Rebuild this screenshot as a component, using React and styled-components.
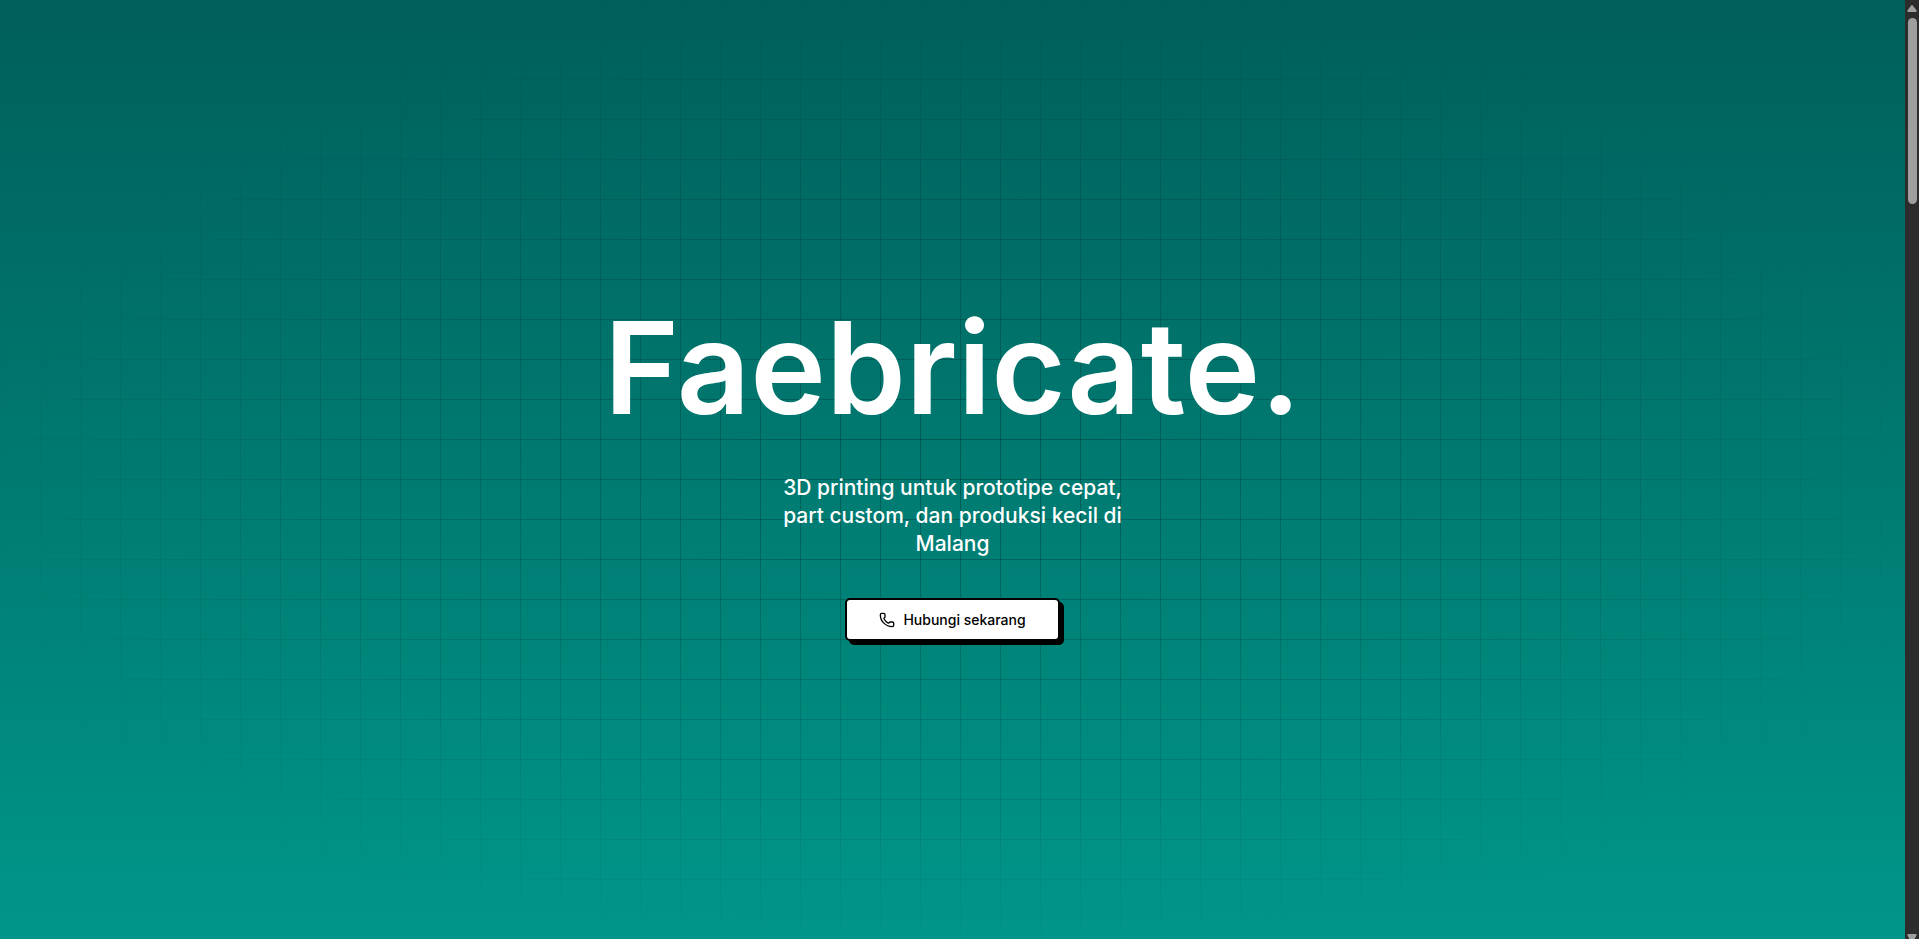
import React from "react";
import styled, { createGlobalStyle } from "styled-components";
import { Phone } from "lucide-react";

const GlobalStyle = createGlobalStyle`
  *, *::before, *::after { box-sizing: border-box; }
  body { margin: 0; background: #009689; }
`;

const Page = styled.div`
  display: flex;
  height: 100vh;
  overflow: hidden;
  font-family: "Inter", "Liberation Sans", sans-serif;
`;

const Hero = styled.main`
  position: relative;
  flex: 1;
  min-width: 0;
  display: flex;
  flex-direction: column;
  align-items: center;
  justify-content: center;
  gap: 40px;
  padding-top: 8px;
  color: #fff;
  background: linear-gradient(to bottom in oklab, #005f5a, #009689);
`;

const Grid = styled.div`
  position: absolute;
  inset: 0;
  background-image:
    linear-gradient(to right, rgba(0, 0, 0, 0.25) 1px, transparent 1px),
    linear-gradient(to bottom, rgba(0, 0, 0, 0.25) 1px, transparent 1px);
  background-size: 40px 40px;
  background-position: 0 -1px;
  mask-image: radial-gradient(ellipse at center, #000, transparent 76%);
`;

const Title = styled.h1`
  position: relative;
  margin: 0;
  padding-bottom: 4px;
  font-size: 128px;
  line-height: 124px;
  font-weight: 600;
`;

const Tagline = styled.p`
  position: relative;
  margin: 0;
  max-width: 360px;
  font-size: 21px;
  line-height: 28px;
  font-weight: 500;
  text-align: center;
`;

const CallButton = styled.button`
  position: relative;
  display: inline-flex;
  align-items: center;
  justify-content: center;
  gap: 8px;
  height: 43px;
  padding: 0 32px;
  border: 2px solid #000;
  border-radius: 5px;
  background: #fff;
  color: #000;
  box-shadow: 4px 4px 0 #000;
  font: 500 14px/20px "Inter", "Liberation Sans", sans-serif;
  cursor: pointer;
`;

const ScrollTrack = styled.aside`
  flex: none;
  width: 14px;
  display: flex;
  flex-direction: column;
  align-items: center;
  padding-top: 5px;
  background: #2c2c2c;
`;

const Arrow = styled.svg`
  flex: none;
  width: 10px;
  height: 7px;
  fill: #9f9f9f;
`;

const Thumb = styled.div`
  width: 9px;
  height: 186px;
  margin-top: 6px;
  margin-bottom: auto;
  border-radius: 5px;
  background: #9f9f9f;
`;

export default function App() {
  return (
    <>
      <GlobalStyle />
      <Page>
        <Hero>
          <Grid />
          <Title>Faebricate.</Title>
          <Tagline>
            3D printing untuk prototipe cepat, part custom, dan produksi kecil di Malang
          </Tagline>
          <CallButton type="button">
            <Phone size={16} strokeWidth={2} aria-hidden="true" />
            Hubungi sekarang
          </CallButton>
        </Hero>
        <ScrollTrack aria-hidden="true">
          <Arrow viewBox="0 0 10 7">
            <path d="M4 .8Q5-.6 6 .8L9.6 5.5Q10 7 8.600 7H1.400Q0 7 .4 5.500Z" />
          </Arrow>
          <Thumb />
          <Arrow viewBox="0 0 10 7">
            <path d="M1.400 2H8.600Q10 2 9.600 3.500L8 6V7H2V6L.4 3.500Q0 2 1.400 2Z" />
          </Arrow>
        </ScrollTrack>
      </Page>
    </>
  );
}
